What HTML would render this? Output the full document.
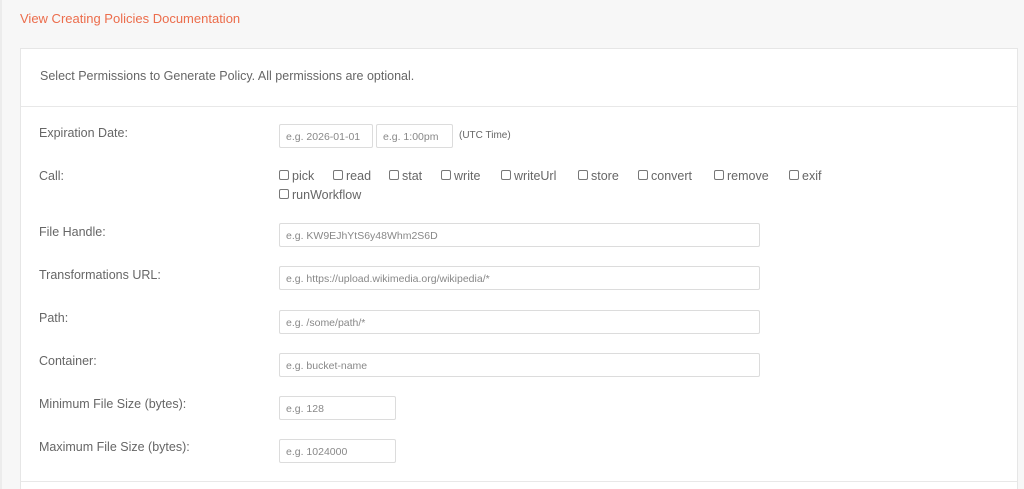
<!DOCTYPE html>
<html><head><style>
*{box-sizing:border-box;margin:0;padding:0}
html{width:1024px;height:489px;overflow:hidden}
body{width:1024px;height:489px;background:#f7f7f7;font-family:"Liberation Sans",sans-serif;position:relative;overflow:hidden;color:#666}
.edge{position:absolute;left:0;top:0;width:2px;height:489px;background:#ececec}
a{position:absolute;left:20px;top:11px;color:#ec6d4c;font-size:13px;text-decoration:none}
.card{position:absolute;left:20px;top:48px;width:998px;height:460px;background:#fff;border:1px solid #e6e6e6}
.hdr{position:absolute;left:0;top:0;width:100%;height:58px;border-bottom:1px solid #e8e8e8}
.hdr span{position:absolute;left:19px;top:20px;font-size:12.5px;color:#666}
.bot{position:absolute;left:0;top:432px;width:100%;border-top:1px solid #e8e8e8}
.l{position:absolute;left:39px;font-size:12.5px;color:#666}
.i{position:absolute;height:24px;border:1px solid #dcdcdc;border-radius:2px;font-size:10.5px;color:#888;padding:6px 6px 0;background:#fff}
.c{position:absolute;font-size:12.5px;color:#666}
.c:before{content:"";display:inline-block;width:8px;height:8px;border:1px solid #777;border-radius:2px;margin-right:3px;vertical-align:0}
.u{position:absolute;font-size:10px;color:#666}
</style></head><body>
<div class="edge"></div>
<a>View Creating Policies Documentation</a>
<div class="card"><div class="hdr"><span>Select Permissions to Generate Policy. All permissions are optional.</span></div><div class="bot"></div></div>
<div class="l" style="top:126px">Expiration Date:</div>
<div class="i" style="left:279px;top:124px;width:94px">e.g. 2026-01-01</div>
<div class="i" style="left:376px;top:124px;width:77px">e.g. 1:00pm</div>
<div class="u" style="left:459px;top:130px">(UTC Time)</div>
<div class="l" style="top:169px">Call:</div>
<div class="c" style="left:279px;top:169px">pick</div>
<div class="c" style="left:333px;top:169px">read</div>
<div class="c" style="left:389px;top:169px">stat</div>
<div class="c" style="left:441px;top:169px">write</div>
<div class="c" style="left:501px;top:169px">writeUrl</div>
<div class="c" style="left:578px;top:169px">store</div>
<div class="c" style="left:638px;top:169px">convert</div>
<div class="c" style="left:714px;top:169px">remove</div>
<div class="c" style="left:789px;top:169px">exif</div>
<div class="c" style="left:279px;top:188px">runWorkflow</div>
<div class="l" style="top:225px">File Handle:</div>
<div class="i" style="left:279px;top:223px;width:481px">e.g. KW9EJhYtS6y48Whm2S6D</div>
<div class="l" style="top:268px">Transformations URL:</div>
<div class="i" style="left:279px;top:266px;width:481px">e.g. https://upload.wikimedia.org/wikipedia/*</div>
<div class="l" style="top:311px">Path:</div>
<div class="i" style="left:279px;top:310px;width:481px">e.g. /some/path/*</div>
<div class="l" style="top:354px">Container:</div>
<div class="i" style="left:279px;top:353px;width:481px">e.g. bucket-name</div>
<div class="l" style="top:397px">Minimum File Size (bytes):</div>
<div class="i" style="left:279px;top:396px;width:117px">e.g. 128</div>
<div class="l" style="top:440px">Maximum File Size (bytes):</div>
<div class="i" style="left:279px;top:439px;width:117px">e.g. 1024000</div>
</body></html>
